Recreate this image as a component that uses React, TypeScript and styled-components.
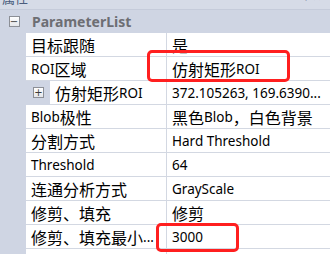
import React from 'react'
import styled, { createGlobalStyle } from 'styled-components'

const GlobalStyle = createGlobalStyle`
    html, body {
        margin: 0;
        padding: 0;
        background: #ffffff;
        overflow: hidden;
    }
    body {
        font-family: "Noto Sans", "Noto Sans CJK SC", sans-serif;
        font-size: 13.5px;
        color: #000000;
    }
`;

type Row = { name: string; value: string; child?: boolean }

const rows: Row[] = [
    { name: '目标跟随', value: '是' },
    { name: 'ROI区域', value: '仿射矩形ROI' },
    { name: '仿射矩形ROI', value: '372.105263, 169.6390...', child: true },
    { name: 'Blob极性', value: '黑色Blob，白色背景' },
    { name: '分割方式', value: 'Hard Threshold' },
    { name: 'Threshold', value: '64' },
    { name: '连通分析方式', value: 'GrayScale' },
    { name: '修剪、填充', value: '修剪' },
    { name: '修剪、填充最小...', value: '3000' },
    { name: '', value: '' },
]

// CJK runs are drawn a bit larger than latin text, like the original UI font
const Text: React.FC<{ children: string }> = ({ children }) => {
    const parts = children.split(/([\u3000-\u9fff\uff00-\uffef]+)/).filter(Boolean)
    return (
        <>
            {parts.map((p, i) =>
                /[\u3000-\u9fff\uff00-\uffef]/.test(p) ? <Han key={i}>{p}</Han> : <span key={i}>{p}</span>
            )}
        </>
    )
}

const App: React.FC = () => {
    return (
        <Panel>
            <GlobalStyle />
            <TitleStrip>
                <TitleText>属性</TitleText>
                <TitleTools>▾ ✕</TitleTools>
            </TitleStrip>
            <Category>
                <Margin>
                    <ToggleBox>−</ToggleBox>
                </Margin>
                <CategoryName>ParameterList</CategoryName>
            </Category>
            {rows.map((r, i) => (
                <PropRow key={i}>
                    <Margin $wide={r.child}>
                        {r.child && <ToggleBox>+</ToggleBox>}
                    </Margin>
                    <NameCell>
                        <Text>{r.name}</Text>
                    </NameCell>
                    <ValueCell>
                        <Text>{r.value}</Text>
                    </ValueCell>
                </PropRow>
            ))}
            <Highlight $left={147} $top={50} $w={143} $h={32} />
            <Highlight $left={156} $top={223} $w={83} $h={29} />
        </Panel>
    )
}

const Panel = styled.div`
    position: relative;
    width: 330px;
    height: 254px;
    overflow: hidden;
    background: #ffffff;
`;

const TitleStrip = styled.div`
    height: 10px;
    background: #d6dbe7;
    border-bottom: 1px solid #c5cbda;
    box-sizing: border-box;
    display: flex;
    justify-content: space-between;
    overflow: hidden;
`;

const TitleText = styled.div`
    margin-top: -11px;
    padding-left: 2px;
    font-size: 13px;
    line-height: 18px;
    color: #4a5c7c;
`;

const TitleTools = styled.div`
    margin-top: -12px;
    padding-right: 8px;
    font-size: 12px;
    line-height: 18px;
    color: #5a6a88;
`;

const Category = styled.div`
    height: 23px;
    display: flex;
    align-items: center;
    background: #cfd5e3;
`;

const CategoryName = styled.div`
    padding-left: 6px;
    font-weight: bold;
    font-size: 14px;
    color: #6d6e73;
`;

const PropRow = styled.div`
    height: 24px;
    display: flex;
`;

const Margin = styled.div<{ $wide?: boolean }>`
    width: ${p => (p.$wide ? 50 : 26)}px;
    flex-shrink: 0;
    height: 100%;
    background: #cfd5e3;
    display: flex;
    align-items: center;
    justify-content: ${p => (p.$wide ? 'flex-end' : 'center')};
    padding: ${p => (p.$wide ? '0 6px 1px 0' : '0 0 0 2px')};
    box-sizing: border-box;
`;

const ToggleBox = styled.div`
    width: 11px;
    height: 11px;
    box-sizing: border-box;
    border: 1px solid #8c8f96;
    background: linear-gradient(#ffffff, #e4e6ea);
    display: flex;
    align-items: center;
    justify-content: center;
    font-family: "DejaVu Sans", sans-serif;
    font-size: 10px;
    line-height: 9px;
    color: #3c3c3c;
`;

const NameCell = styled.div`
    flex: 1;
    height: 23px;
    border-bottom: 1px solid #d3d8e2;
    border-right: 1px solid #d3d8e2;
    display: flex;
    align-items: center;
    padding-left: 5px;
    white-space: nowrap;
    overflow: hidden;
`;

const ValueCell = styled.div`
    width: 158px;
    flex-shrink: 0;
    height: 23px;
    border-bottom: 1px solid #d3d8e2;
    display: flex;
    align-items: center;
    padding-left: 5px;
    white-space: nowrap;
    overflow: hidden;
`;

const Han = styled.span`
    font-family: "Noto Sans CJK SC", sans-serif;
    font-size: 16px;
`;

const Highlight = styled.div<{ $left: number; $top: number; $w: number; $h: number }>`
    position: absolute;
    left: ${p => p.$left}px;
    top: ${p => p.$top}px;
    width: ${p => p.$w}px;
    height: ${p => p.$h}px;
    box-sizing: border-box;
    border: 3px solid #ff1f1f;
    border-radius: 5px;
`;

export default App
